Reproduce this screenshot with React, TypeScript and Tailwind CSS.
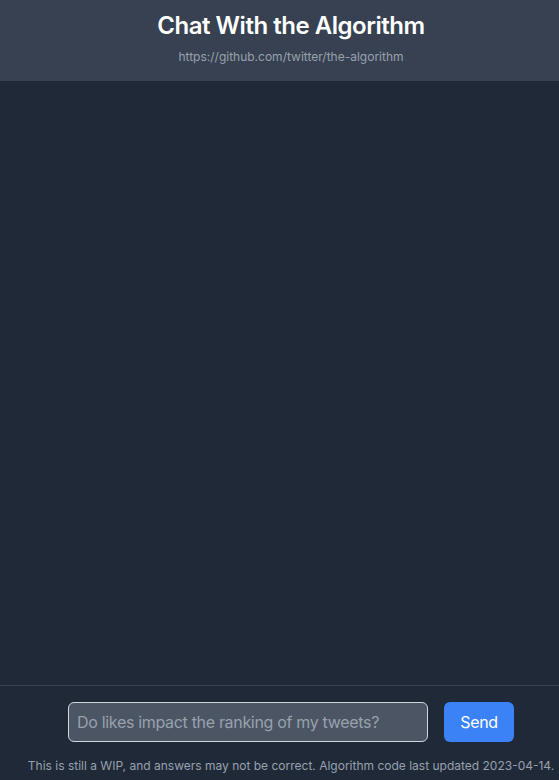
export default function App() {
  return (
    <div
      className="h-screen w-screen overflow-hidden bg-[#1f2937]"
      style={{ fontFamily: "Inter, 'Noto Sans', sans-serif" }}
    >
      <div className="flex h-full w-[582px] flex-col">
        {/* Header */}
        <header className="flex h-[81px] flex-col items-center bg-[#374151] pt-[10px]">
          <h1 className="text-2xl font-semibold leading-8 tracking-[-0.02em] text-white">Chat With the Algorithm</h1>
          <p className="mt-[7px] text-xs text-gray-400">https://github.com/twitter/the-algorithm</p>
        </header>

        {/* Messages */}
        <main className="flex-1" />

        {/* Composer */}
        <footer className="border-t border-[#374151] pt-4 pb-1.5">
          <form className="flex justify-center gap-4" onSubmit={(e) => e.preventDefault()}>
            <input
              type="text"
              placeholder="Do likes impact the ranking of my tweets?"
              className="h-10 w-[360px] rounded-md border border-gray-300 bg-[#4b5563] px-2 text-base tracking-[-0.02em] text-white placeholder:text-gray-400 outline-none"
            />
            <button type="submit" className="h-10 w-[70px] rounded-md bg-[#3b82f6] text-base tracking-[-0.02em] text-white">
              Send
            </button>
          </form>
          <p className="mt-4 text-center text-xs leading-4 text-gray-400">
            This is still a WIP, and answers may not be correct. Algorithm code last updated 2023-04-14.
          </p>
        </footer>
      </div>
    </div>
  )
}
